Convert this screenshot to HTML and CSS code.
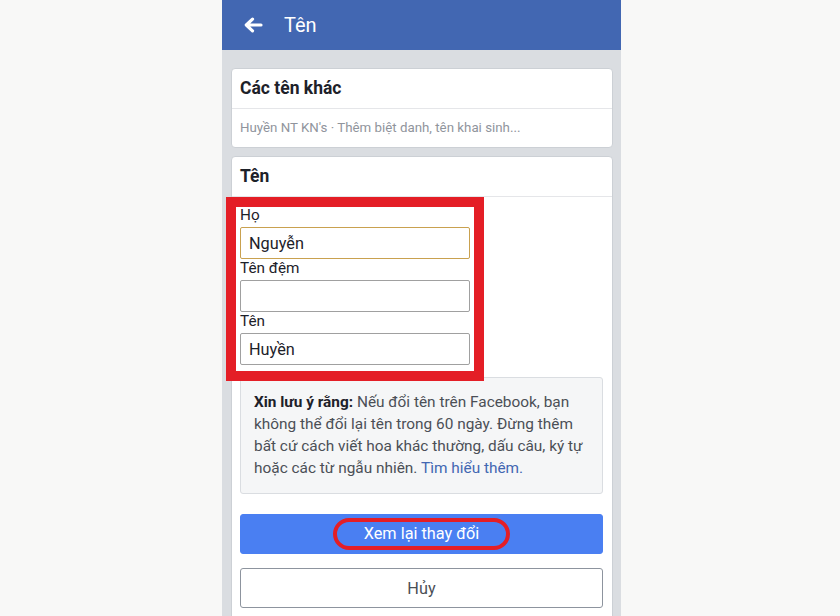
FILE: index.html
```html
<!DOCTYPE html>
<html lang="vi">
<head>
    <meta charset="UTF-8">
    <title>Tên</title>
    <link rel="stylesheet" href="styles.css">
</head>
<body>
    <div class="screen">
        <div class="topbar">
            <svg class="back" width="20" height="16" viewBox="0 0 20 16">
                <path d="M18 8H4M9.5 2.2L3.3 8l6.2 5.8" fill="none" stroke="#fff" stroke-width="3.2" stroke-linecap="round" stroke-linejoin="round"/>
            </svg>
            <span class="topbar-title">Tên</span>
        </div>

        <div class="card">
            <div class="card-title">Các tên khác</div>
            <div class="card-sub">Huyền NT KN's · Thêm biệt danh, tên khai sinh...</div>
        </div>

        <div class="card card-main">
            <div class="card-title">Tên</div>
            <div class="card-body">
                <div class="fields">
                    <label for="ho" class="first">Họ</label>
                    <input type="text" id="ho" class="field field-focus" value="Nguyễn">
                    <label for="dem">Tên đệm</label>
                    <input type="text" id="dem" class="field" value="">
                    <label for="ten">Tên</label>
                    <input type="text" id="ten" class="field" value="Huyền">
                </div>

                <p class="note"><b>Xin lưu ý rằng:</b> Nếu đổi tên trên Facebook, bạn không thể đổi lại tên trong 60 ngày. Đừng thêm bất cứ cách viết hoa khác thường, dấu câu, ký tự hoặc các từ ngẫu nhiên. <a href="#">Tìm hiểu thêm.</a></p>

                <button class="btn btn-primary"><span class="pill">Xem lại thay đổi</span></button>
                <button class="btn btn-cancel">Hủy</button>
            </div>
        </div>
    </div>
</body>
</html>
```

FILE: styles.css
```css
body { margin: 0; background: #f8f8f7; font-family: Roboto, "Liberation Sans", sans-serif; color: #1d2129; }
.screen { width: 399px; margin-left: 222px; height: 616px; overflow: hidden; background: #dadde1; }

.topbar { height: 50px; background: #4267b2; display: flex; align-items: center; }
.back { margin-left: 21px; }
.topbar-title { margin-left: 21px; color: #fff; font-size: 20px; }

.card { margin: 18px 8px 0 9px; background: #fff; border: 1px solid #ccd0d5; border-radius: 4px; }
.card-main { margin-top: 8px; min-height: 480px; }
.card-title { height: 39px; line-height: 39px; padding: 0 8px; font-size: 17.5px; font-weight: bold; border-bottom: 1px solid #e5e6e9; }
.card-sub { height: 38px; line-height: 38px; padding: 0 8px; font-size: 13.3px; color: #90949c; }

.card-body { padding: 10px 9px 0 8px; }
.fields { width: 230px; padding: 0 4px 6px; margin-left: -4px; outline: 10px solid #e41e26; position: relative; z-index: 1; background: #fff; }
.fields label { display: block; height: 21px; line-height: 19px; font-size: 15.3px; }
.fields label.first { height: 20px; margin-top: 0; line-height: 17px; }
.field { display: block; box-sizing: border-box; width: 230px; height: 32px; margin: 0; padding: 0 8px; border: 1px solid #a0a0a0; border-radius: 2px; font: 16.3px Roboto, "Liberation Sans", sans-serif; color: #1d2129; outline: none; }
.field-focus { border-color: #c9a14f; }

.note { margin: 6px 0 0; padding: 13px 10px 14px 13px; background: #f5f6f7; border: 1px solid #dadde1; border-radius: 3px; font-size: 15.4px; line-height: 22px; color: #4b4f56; }
.note b { color: #1d2129; }
.note a { color: #4267b2; text-decoration: none; }

.btn { display: block; box-sizing: border-box; width: 100%; height: 40px; border-radius: 3px; font: 16.3px Roboto, "Liberation Sans", sans-serif; cursor: pointer; }
.btn-primary { margin-top: 20px; background: #4a7ff2; color: #fff; border: 1px solid #4a7ff2; padding: 0; }
.pill { display: inline-block; box-sizing: border-box; width: 177px; height: 32px; line-height: 24px; border: 4px solid #e41e26; border-radius: 16px; }
.btn-cancel { margin-top: 14px; background: #fff; color: #4b4f56; border: 1px solid #8d949e; }
```
